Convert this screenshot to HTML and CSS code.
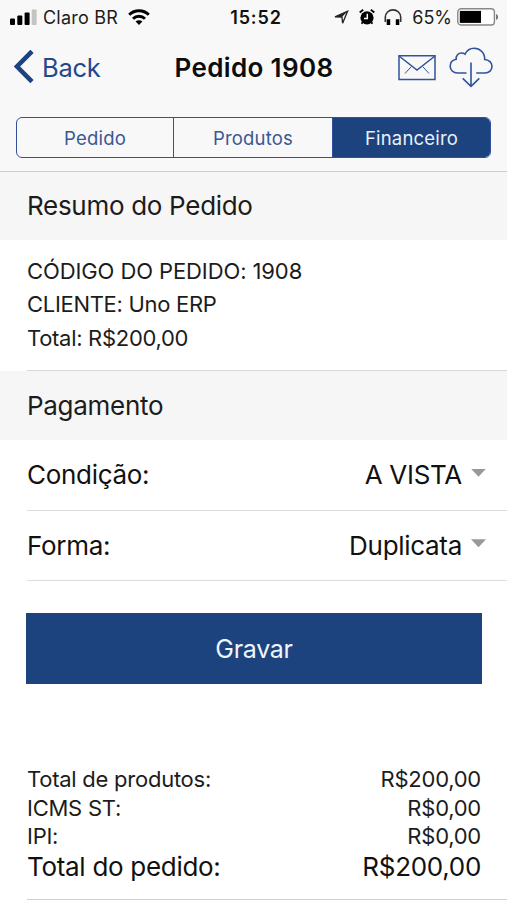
FILE: index.html
```html
<!DOCTYPE html>
<html lang="pt-BR">
<head>
    <meta charset="UTF-8">
    <meta name="viewport" content="width=device-width, initial-scale=1.0">
    <title>Pedido 1908</title>
    <link rel="stylesheet" href="styles.css">
</head>
<body>
    <header class="top">
        <div class="status-bar">
            <div class="status-left">
                <svg width="27" height="16" viewBox="0 0 27 16">
                    <rect x="0" y="9.5" width="5" height="6.5" rx="1"/>
                    <rect x="7.3" y="6.5" width="5" height="9.5" rx="1"/>
                    <rect x="14.6" y="3.5" width="5" height="12.5" rx="1"/>
                    <rect x="21.7" y="0.5" width="5" height="15.5" rx="1" fill="#c4c4c4"/>
                </svg>
                <span class="carrier">Claro BR</span>
                <svg class="wifi" width="22" height="16" viewBox="0 0 22 16" fill="none" stroke="#000" stroke-width="3">
                    <path d="M1.2 5.8a14 14 0 0 1 19.6 0"/>
                    <path d="M5 9.7a8.6 8.6 0 0 1 12 0"/>
                    <path d="M11 16 7.6 12.6a4.9 4.9 0 0 1 6.8 0z" fill="#000" stroke="none"/>
                </svg>
            </div>
            <span class="clock">15:52</span>
            <div class="status-right">
                <svg width="15" height="15" viewBox="0 0 15 15" fill="none" stroke="#222" stroke-width="1.3">
                    <path d="M1 6.9 13.6 1.3 8.6 13.3 8 7.1z"/>
                    <path d="M1 6.9 13.6 1.3 8 7.1z" fill="#222" stroke="none"/>
                </svg>
                <svg class="alarm" width="16" height="16" viewBox="0 0 16 16">
                    <circle cx="8" cy="8.8" r="6.6"/>
                    <path d="M.7 3.5 4.2.8M11.8.8l3.5 2.7M3.6 13.2l-1 1.5M12.4 13.2l1 1.5" stroke="#000" stroke-width="1.8"/>
                    <path d="M8.3 4.8v4.6H5" fill="none" stroke="#fff" stroke-width="1.5"/>
                </svg>
                <svg class="headphones" width="18" height="16" viewBox="0 0 18 16">
                    <path d="M1.3 13V8.2a7.7 7.3 0 0 1 15.4 0V13" fill="none" stroke="#333" stroke-width="1.6"/>
                    <path d="M2.7 10.2h3.5V16H2.7zM11.8 10.2h3.5V16h-3.5z"/>
                </svg>
                <span class="percent">65%</span>
                <svg width="42" height="18" viewBox="0 0 42 18">
                    <rect x=".8" y=".8" width="36.6" height="16.2" rx="3.2" fill="#fff" stroke="#888" stroke-width="1.4"/>
                    <rect x="2.8" y="2.9" width="21.2" height="12"/>
                    <path d="M39 6v6c2.8-.8 2.8-5.2 0-6z" fill="#777"/>
                </svg>
            </div>
        </div>

        <nav class="nav-bar">
            <a class="back">
                <svg width="20" height="34" viewBox="0 0 20 34" fill="none" stroke="#1c437e" stroke-width="4.6">
                    <path d="M18 1.3 3 16.500l15 15.200"/>
                </svg>
                <span>Back</span>
            </a>
            <h1>Pedido 1908</h1>
            <div class="actions">
                <svg width="38" height="27" viewBox="0 0 38 27" fill="none" stroke="#2f539b" stroke-width="1.5">
                    <path d="M1 1.8h36v23.6H1z"/>
                    <path d="M1 2l18 14L37 2"/>
                    <path d="M7 19.5l6.2-6.8M31 19.5l-6.2-6.8" stroke-width="1"/>
                </svg>
                <svg class="cloud" width="44" height="41" viewBox="0 0 44 41" fill="none" stroke="#2f539b" stroke-width="1.6">
                    <path d="M17.5 26H8.4C4.2 26 1.2 22.8 1.2 19.2c0-3.7 2.5-6.4 6-7C6.7 8.5 9.5 6 12.5 6c1.4 0 2.5.4 3.5 1.2C17.9 3.3 21.3 1.2 25 1.2c6.2 0 11 4.9 10.7 11.3 4.3.2 7.3 3.1 7.3 6.7 0 3.9-3 6.8-7 6.8h-8.8"/>
                    <path d="M22 15.5v23.7M13.7 31.4l8.3 7.9 8.3-7.9"/>
                </svg>
            </div>
        </nav>

        <div class="segments">
            <div class="segment">Pedido</div>
            <div class="segment">Produtos</div>
            <div class="segment active">Financeiro</div>
        </div>
    </header>

    <main>
        <h2>Resumo do Pedido</h2>
        <div class="summary">
            <p class="code">CÓDIGO DO PEDIDO: 1908</p>
            <p>CLIENTE: Uno ERP</p>
            <p>Total: R$200,00</p>
        </div>

        <h2 class="payment">Pagamento</h2>
        <div class="field">
            <span>Condição:</span>
            <span class="value">A VISTA</span>
            <span class="caret"></span>
        </div>
        <div class="field">
            <span>Forma:</span>
            <span class="value">Duplicata</span>
            <span class="caret"></span>
        </div>

        <button class="save">Gravar</button>

        <div class="totals">
            <div class="line"><span>Total de produtos:</span><span>R$200,00</span></div>
            <div class="line"><span>ICMS ST:</span><span>R$0,00</span></div>
            <div class="line"><span>IPI:</span><span>R$0,00</span></div>
            <div class="line total"><span>Total do pedido:</span><span>R$200,00</span></div>
        </div>
    </main>
</body>
</html>
```
FILE: styles.css
```css
* {
    box-sizing: border-box;
}
body {
    margin: 0;
    height: 900px;
    overflow: hidden;
    font-family: Inter, "Liberation Sans", sans-serif;
    color: #1c1c1c;
    background: #fff;
}
svg {
    display: block;
    flex: none;
}
h1, h2, p {
    margin: 0;
    font-weight: 400;
}
.top {
    height: 172px;
    background: #f8f8f8;
    border-bottom: 1px solid #cfcfcf;
}

/* status bar */
.status-bar {
    display: grid;
    grid-template-columns: 1fr auto 1fr;
    align-items: center;
    height: 34px;
    padding: 0 8px 0 10px;
    font-size: 18px;
}
.status-left, .status-right {
    display: flex;
    align-items: center;
}
.status-right { justify-content: flex-end; }
.carrier { margin-left: 6px; letter-spacing: 0.2px; }
.wifi { margin-left: 10px; }
.clock { padding-left: 3px; font-weight: 600; letter-spacing: 0.9px; color: #111; }
.alarm { margin-left: 10px; }
.headphones { margin-left: 9px; }
.percent { margin: 0 5px 0 10px; }

/* navigation */
.nav-bar {
    display: grid;
    grid-template-columns: 1fr auto 1fr;
    align-items: center;
    height: 66px;
    padding: 0 14px;
}
.back {
    display: flex;
    align-items: center;
    gap: 8px;
    font-size: 25.5px;
    letter-spacing: -0.3px;
    color: #26488a;
}
h1 {
    padding-left: 1px;
    font-size: 26px;
    font-weight: 600;
    letter-spacing: 0.35px;
    color: #0c0c0c;
}
.actions {
    display: flex;
    align-items: center;
    justify-content: flex-end;
}
.cloud { margin-left: 13px; }

.segments {
    display: grid;
    grid-template-columns: 156px 1fr 158px;
    height: 41px;
    margin: 17px 16px 0;
    border: 1px solid #33509a;
    border-radius: 6px;
    overflow: hidden;
}
.segment {
    display: flex;
    align-items: center;
    justify-content: center;
    font-size: 18.5px;
    letter-spacing: 0.2px;
    color: #3a5795;
}
.segment + .segment { border-left: 1px solid #33509a; }
.segment.active {
    background: #1c437e;
    color: #e9f1fb;
}

/* content */
h2 {
    height: 68px;
    padding-left: 27px;
    line-height: 68px;
    font-size: 26px;
    letter-spacing: -0.3px;
    background: #f6f6f6;
}
.payment {
    height: 69px;
    line-height: 70px;
}
.summary {
    height: 131px;
    margin-left: 27px;
    padding-top: 15px;
    border-bottom: 1px solid #d9d9d9;
    font-size: 22px;
    line-height: 33.4px;
    letter-spacing: -0.3px;
}
.code { letter-spacing: -0.1px; }
.field {
    display: flex;
    align-items: center;
    height: 70.5px;
    margin-left: 27px;
    padding-right: 21px;
    border-bottom: 1px solid #dcdcdc;
    font-size: 26px;
    letter-spacing: -0.3px;
    color: #111;
}
.value { margin-left: auto; }
.caret {
    width: 15px;
    height: 8px;
    margin: 0 0 4px 9px;
    background: #999;
    clip-path: polygon(0 0, 100% 0, 50% 100%);
}
.save {
    display: block;
    width: 456px;
    height: 71px;
    margin: 32px 0 0 26px;
    padding: 0;
    border: none;
    background: #1c437e;
    color: #f0f5fc;
    font-family: inherit;
    font-size: 25px;
    letter-spacing: -0.3px;
}
.totals {
    height: 135px;
    margin: 81px 0 0 27px;
    padding-right: 26px;
    border-bottom: 1px solid #cfcfcf;
    font-size: 22px;
    letter-spacing: -0.25px;
}
.line {
    display: flex;
    justify-content: space-between;
    line-height: 28.5px;
}
.total {
    font-size: 26px;
    line-height: 31px;
    letter-spacing: -0.3px;
    color: #111;
}
```
